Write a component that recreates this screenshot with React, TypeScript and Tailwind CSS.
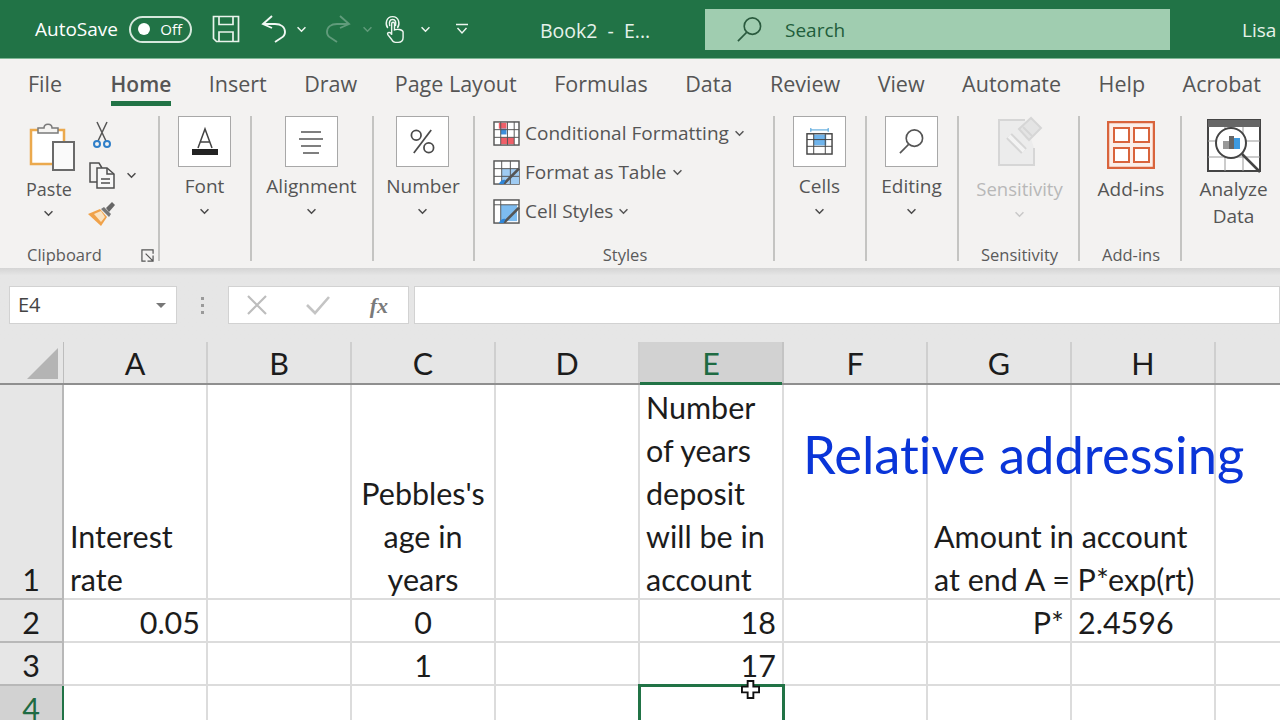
import { ReactNode } from "react";

const UI = "font-['Open_Sans','Noto_Sans',sans-serif]";
const SHEET = "font-['Lato','Liberation_Sans',sans-serif]";

function Chevron({ className = "", color = "#4a4a4a" }: { className?: string; color?: string }) {
  return (
    <svg viewBox="0 0 12 8" className={`w-[11px] h-[7px] ${className}`} fill="none" stroke={color} strokeWidth="1.7">
      <path d="M1.5 1.5 6 6l4.5-4.5" />
    </svg>
  );
}

function SaveIcon() {
  return (
    <svg viewBox="0 0 28 28" className="w-[28px] h-[28px]" fill="none" stroke="#e9f3ec" strokeWidth="1.7">
      <path d="M1.5 1.5h25v25h-22l-3-3z" />
      <path d="M7 1.5v8h14v-8M7 26.5V17h14v9.5" />
    </svg>
  );
}

function UndoIcon({ dim }: { dim?: boolean }) {
  return (
    <svg viewBox="0 0 26 28" className={`w-[26px] h-[28px] ${dim ? "-scale-x-100 opacity-30" : ""}`} fill="none" stroke="#f2f8f4" strokeWidth="1.9">
      <path d="M11 1 2 9l9 4" />
      <path d="M2 9h12c6 0 10 3 10 8 0 3-2 5-4 6l-6 4" />
    </svg>
  );
}

function TouchIcon() {
  return (
    <svg viewBox="0 0 22 30" className="w-[21px] h-[30px]" fill="none" stroke="#eef6f0" strokeWidth="1.5">
      <path d="M4 14C1 10 2 2 9 2s8 8 5 12" />
      <path d="M6 12C5 8 6 5 9 5s4 3 3 7" />
      <path d="M8 21V9.500c0-2 3-2 3 0V16c2-1 8-1 9 2v6c0 3-2 5-5 5h-3c-2 0-3-1-4-3l-4-5c-1-2 1-3 3-2z" fill="#217346" />
    </svg>
  );
}

function SearchGlass({ color, className }: { color: string; className: string }) {
  return (
    <svg viewBox="0 0 28 28" className={className} fill="none" stroke={color} strokeWidth="1.7">
      <circle cx="17" cy="10.500" r="8.500" />
      <path d="M11 17 2 26" />
    </svg>
  );
}

function PasteIcon() {
  return (
    <svg viewBox="0 0 48 50" className="w-[48px] h-[50px]">
      <path d="M2 8h33v34H2z" fill="#fff" stroke="#eba94d" strokeWidth="2.500" />
      <path d="M9 11V6h6c0-5 8-5 8 0h6v5z" fill="#f5f4f2" stroke="#7a7a7a" strokeWidth="1.500" />
      <path d="M24 20h21v28H24z" fill="#fafafa" stroke="#6a6a6a" strokeWidth="2" />
    </svg>
  );
}

function ScissorsIcon() {
  return (
    <svg viewBox="0 0 20 28" className="w-[20px] h-[28px]" fill="none">
      <path d="M5 1l9 19M15 1 6 20" stroke="#555" strokeWidth="1.500" />
      <circle cx="5" cy="23" r="3" stroke="#2f7fc9" strokeWidth="2" />
      <circle cx="15" cy="23" r="3" stroke="#2f7fc9" strokeWidth="2" />
    </svg>
  );
}

function CopyIcon() {
  return (
    <svg viewBox="0 0 28 28" className="w-[28px] h-[28px]" fill="none" stroke="#4f4f4f" strokeWidth="1.500">
      <path d="M9 21H2V2h9l3 5" />
      <path d="M9 7h10l7 6v14H9z" fill="#f8f8f8" />
      <path d="M19 7v6h7M13 18h9M13 22h9" />
    </svg>
  );
}

function BrushIcon() {
  return (
    <svg viewBox="0 0 28 26" className="w-[28px] h-[26px]">
      <path d="M0 13 12 8l7 8-6 9z" fill="#f0a24a" />
      <path d="M6 13l7-3 4 6-4 5z" fill="#fbe3c2" />
      <path d="M13 8l8 8 2-3-7-7z" fill="#777" />
      <path d="M18 7l6-6 3 3-6 7z" fill="#666" />
    </svg>
  );
}

function FontIcon() {
  return (
    <svg viewBox="0 0 28 32" className="w-[28px] h-[32px]">
      <path d="M7 22 14 3l7 19M9.500 16h9" fill="none" stroke="#444" strokeWidth="1.500" />
      <rect x="1" y="23" width="26" height="6" fill="#222" />
    </svg>
  );
}

function AlignIcon() {
  return (
    <svg viewBox="0 0 26 24" className="w-[26px] h-[24px]" stroke="#555" strokeWidth="1.500">
      <path d="M3 2h20M1 9h24M3 16h20M5 23h16" />
    </svg>
  );
}

function PercentIcon() {
  return (
    <svg viewBox="0 0 28 28" className="w-[27px] h-[27px]" fill="none" stroke="#4a4a4a" strokeWidth="1.800">
      <circle cx="7.500" cy="7.500" r="5" />
      <circle cx="20.500" cy="20.500" r="5" />
      <path d="M23 2 5 26" />
    </svg>
  );
}

function CondIcon() {
  return (
    <svg viewBox="0 0 28 26" className="w-[27px] h-[25px]">
      <rect x="1" y="1" width="26" height="24" fill="#fff" stroke="#555" strokeWidth="1.500" />
      <rect x="6" y="2" width="8" height="6" fill="#ef5f68" />
      <rect x="8" y="8" width="6" height="6" fill="#3d8fdc" />
      <rect x="8" y="17" width="14" height="7" fill="#ef5f68" />
      <path d="M1 9h26M1 17h26M8 1v24M15 1v24M22 1v24" stroke="#555" strokeWidth="1" />
    </svg>
  );
}

function TableIcon() {
  return (
    <svg viewBox="0 0 28 26" className="w-[27px] h-[25px]">
      <rect x="1" y="1" width="26" height="24" fill="#fff" stroke="#555" strokeWidth="1.500" />
      <path d="M9 9h18v16H9z" fill="#9fcbf2" />
      <path d="M1 9h26M1 17h26M9 1v24M18 1v24" stroke="#555" strokeWidth="1" />
      <path d="M9 25 26 8l2 2-15 15z" fill="#555" />
      <path d="M6 25c2-4 5-5 7-4l-2 4z" fill="#2f86d8" />
    </svg>
  );
}

function CellStyleIcon() {
  return (
    <svg viewBox="0 0 28 26" className="w-[27px] h-[25px]">
      <rect x="1" y="1" width="26" height="24" fill="#fff" stroke="#555" strokeWidth="1.500" />
      <rect x="8" y="6" width="17" height="17" fill="#7dbcf0" />
      <path d="M1 6h26M8 1v24" stroke="#555" strokeWidth="1" />
      <path d="M9 25 26 8l2 2-15 15z" fill="#555" />
      <path d="M6 25c2-4 5-5 7-4l-2 4z" fill="#2f86d8" />
    </svg>
  );
}

function CellsIcon() {
  return (
    <svg viewBox="0 0 28 28" className="w-[27px] h-[27px]">
      <path d="M5 2h18M5 0v4M23 0v4" stroke="#3d9ad6" strokeWidth="1" />
      <rect x="1" y="6" width="26" height="21" fill="#fff" stroke="#444" strokeWidth="1.500" />
      <rect x="8" y="7" width="13" height="11" fill="#6fb4ec" />
      <path d="M1 12h26M1 19h26M8 6v21M20 6v21" stroke="#444" strokeWidth="1" />
    </svg>
  );
}

function SensitivityIcon() {
  return (
    <svg viewBox="0 0 46 50" className="w-[46px] h-[50px]" fill="none" stroke="#d6d6d6" strokeWidth="2">
      <path d="M28 4H2v45h35V32" fill="#ececec" />
      <path d="M12 20 27 35" strokeWidth="8" />
      <path d="M12 20 27 35" strokeWidth="4" stroke="#f3f3f3" />
      <path d="M22 13 34 2l10 10-12 12z" fill="#e4e4e4" />
      <path d="M26 11l9 9" />
    </svg>
  );
}

function AddinsIcon() {
  return (
    <svg viewBox="0 0 48 48" className="w-[48px] h-[48px]" fill="none" stroke="#d9643c" strokeWidth="2">
      <rect x="1" y="1" width="46" height="46" fill="#fbeee8" stroke="#d9643c" strokeWidth="2.500" />
      <rect x="7" y="7" width="15" height="14" fill="#fff" />
      <rect x="27" y="7" width="15" height="14" fill="#fff" />
      <rect x="7" y="27" width="15" height="14" fill="#fff" />
      <rect x="27" y="27" width="15" height="14" fill="#fff" />
    </svg>
  );
}

function AnalyzeIcon() {
  return (
    <svg viewBox="0 0 54 54" className="w-[54px] h-[54px]" fill="none">
      <rect x="1" y="1" width="52" height="51" fill="#fff" stroke="#444" strokeWidth="2" />
      <rect x="1" y="1" width="52" height="7" fill="#666" />
      <path d="M1 22h52M1 38h52M18 8v44M36 8v44" stroke="#999" strokeWidth="1" />
      <circle cx="24" cy="24" r="15" fill="#fff" stroke="#444" strokeWidth="2" />
      <rect x="16" y="22" width="6" height="8" fill="#999" />
      <rect x="22" y="17" width="5" height="13" fill="#666" />
      <rect x="27" y="19" width="6" height="11" fill="#3d9ae0" />
      <path d="M35 35 53 53" stroke="#444" strokeWidth="2.500" />
    </svg>
  );
}

function BoxButton({ label, icon }: { label: string; icon: ReactNode }) {
  return (
    <div className="flex flex-col items-center mr-[3px]">
      <div className="w-[53px] h-[51px] bg-white border border-[#a8a8a8] flex items-center justify-center">{icon}</div>
      <span className="mt-[6px] text-[19px] leading-[26px] text-[#555]">{label}</span>
      <Chevron className="mt-[9px]" />
    </div>
  );
}

function Group({ width, label, labelClass = "text-center", children }: { width: string; label?: string; labelClass?: string; children: ReactNode }) {
  return (
    <div className={`${width} relative h-full shrink-0 flex flex-col`}>
      <div className="flex-1 min-h-0 flex justify-center">{children}</div>
      <div className={`h-[24px] text-[16.5px] leading-[36px] text-[#5a5a5a] ${labelClass}`}>{label}</div>
      <div className="absolute right-0 top-0 bottom-0 w-[2px] bg-[#c4c4c2]" />
    </div>
  );
}

function StyleRow({ icon, label }: { icon: ReactNode; label: string }) {
  return (
    <div className="h-[39px] flex items-center gap-[5px]">
      {icon}
      <span className="text-[19px] text-[#555] whitespace-nowrap">{label}</span>
      <Chevron className="w-[9px] h-[6px]" color="#555" />
    </div>
  );
}

function Ribbon() {
  return (
    <div className="h-[160px] shrink-0 bg-[#f3f2f1] flex pt-[8px] pb-[7px] overflow-hidden">
      <Group width="w-[160px]" label="Clipboard" labelClass="pl-[27px]">
        <div className="flex w-full">
          <div className="flex flex-col w-[45px] ml-[26px] pt-[6px] shrink-0">
            <div className="ml-[3px] w-[48px]"><PasteIcon /></div>
            <span className="mt-[4px] text-[18px] leading-[26px] text-[#555] text-center">Paste</span>
            <Chevron className="mt-[8px] self-center" />
          </div>
          <div className="flex flex-col ml-[21px] pt-[5px] gap-[12px]">
            <ScissorsIcon />
            <div className="flex items-center gap-[10px] -ml-[4px]">
              <CopyIcon />
              <Chevron />
            </div>
            <div className="-ml-[4px]"><BrushIcon /></div>
          </div>
        </div>
        <svg viewBox="0 0 14 14" className="absolute right-[6px] bottom-[-1px] w-[13px] h-[13px]" fill="none" stroke="#555" strokeWidth="1.300">
          <path d="M13 5V1H1v12h4M5 5l8 8M13 7v6H7" />
        </svg>
      </Group>
      <Group width="w-[92px]">
        <BoxButton label="Font" icon={<FontIcon />} />
      </Group>
      <Group width="w-[122px]">
        <BoxButton label="Alignment" icon={<AlignIcon />} />
      </Group>
      <Group width="w-[101px]">
        <BoxButton label="Number" icon={<PercentIcon />} />
      </Group>
      <Group width="w-[300px]" label="Styles">
        <div className="w-full pl-[18px] -mt-[2px] flex flex-col">
          <StyleRow icon={<CondIcon />} label="Conditional Formatting" />
          <StyleRow icon={<TableIcon />} label="Format as Table" />
          <StyleRow icon={<CellStyleIcon />} label="Cell Styles" />
        </div>
      </Group>
      <Group width="w-[92px]">
        <BoxButton label="Cells" icon={<CellsIcon />} />
      </Group>
      <Group width="w-[92px]">
        <BoxButton label="Editing" icon={<SearchGlass color="#555" className="w-[27px] h-[27px]" />} />
      </Group>
      <Group width="w-[121px]" label="Sensitivity">
        <div className="flex flex-col items-center">
          <SensitivityIcon />
          <span className="mt-[10px] text-[18.500px] leading-[26px] text-[#b8b8b8]">Sensitivity</span>
          <Chevron className="mt-[9px]" color="#c8c8c8" />
        </div>
      </Group>
      <Group width="w-[102px]" label="Add-ins">
        <div className="flex flex-col items-center pt-[5px]">
          <AddinsIcon />
          <span className="mt-[7px] text-[19px] leading-[26px] text-[#555]">Add-ins</span>
        </div>
      </Group>
      <div className="flex-1 flex flex-col items-center pt-[3px] pl-[5px]">
        <AnalyzeIcon />
        <span className="mt-[3px] text-[19px] leading-[27px] text-[#555] text-center">
          Analyze
          <br />
          Data
        </span>
      </div>
    </div>
  );
}

const tabs = ["File", "Home", "Insert", "Draw", "Page Layout", "Formulas", "Data", "Review", "View", "Automate", "Help", "Acrobat"];

function TitleBar() {
  return (
    <div className="h-[59px] shrink-0 bg-[#217346] border-b border-[#7fb795] flex items-center text-white">
      <span className="ml-[35px] text-[19px] leading-[30px]">AutoSave</span>
      <div className="ml-[11px] w-[63px] h-[27px] rounded-full border-2 border-[#d5e8dc] flex items-center justify-between pl-[7px] pr-[8px]">
        <span className="w-[12px] h-[12px] rounded-full bg-white" />
        <span className="text-[15px]">Off</span>
      </div>
      <div className="ml-[20px]"><SaveIcon /></div>
      <div className="ml-[21px]"><UndoIcon /></div>
      <Chevron className="ml-[9px]" color="#eef6f0" />
      <div className="ml-[18px]"><UndoIcon dim /></div>
      <Chevron className="ml-[11px] opacity-30" color="#eef6f0" />
      <div className="ml-[11px]"><TouchIcon /></div>
      <Chevron className="ml-[15px]" color="#eef6f0" />
      <svg viewBox="0 0 12 12" className="ml-[25px] w-[12px] h-[12px]" fill="none" stroke="#eef6f0" strokeWidth="1.400">
        <path d="M0 1.500h12M1.500 5 6 10l4.500-5" />
      </svg>
      <span className="ml-[72px] mt-[3px] w-[165px] text-[19.500px] text-[#e6f2ea] whitespace-nowrap">Book2&nbsp; -&nbsp; E...</span>
      <div className="w-[465px] h-[41px] bg-[#a0cdb0] flex items-center pl-[31px]">
        <SearchGlass color="#2a5a3e" className="w-[27px] h-[27px]" />
        <span className="ml-[22px] mt-[2px] text-[19px] text-[#1f5d3b]">Search</span>
      </div>
      <span className="ml-[72px] mt-[2px] text-[19px] text-[#e6f2ea]">Lisa</span>
    </div>
  );
}

function TabRow() {
  return (
    <div className="h-[49px] shrink-0 bg-[#f3f2f1] flex items-start pl-[28px] gap-[37.500px] text-[#555]">
      {tabs.map((t) => (
        <div key={t} className={`relative h-full flex items-start pt-[10px] ${t === "File" ? "mr-[11px]" : ""}`}>
          <span className={`leading-[30px] whitespace-nowrap ${t === "Home" ? "text-[21px] font-semibold" : "text-[21.500px]"}`}>{t}</span>
          {t === "Home" && <div className="absolute left-0 right-0 bottom-[2px] h-[5px] bg-[#217346]" />}
        </div>
      ))}
    </div>
  );
}

function FormulaBar() {
  return (
    <div className="h-[74px] shrink-0 flex items-center gap-[6px] pl-[9px] bg-gradient-to-b from-[#d4d4d4] from-0% to-[#e6e6e6] to-[10%]">
      <div className="w-[168px] h-[38px] bg-white border border-[#d2d2d2] flex items-center justify-between pl-[8px] pr-[10px]">
        <span className="text-[20px] text-[#444]">E4</span>
        <span className="w-0 h-0 border-x-[5px] border-x-transparent border-t-[5px] border-t-[#777]" />
      </div>
      <div className="w-[39px] flex flex-col items-center gap-[4px]">
        <span className="w-[3px] h-[3px] bg-[#9a9a9a]" />
        <span className="w-[3px] h-[3px] bg-[#9a9a9a]" />
        <span className="w-[3px] h-[3px] bg-[#9a9a9a]" />
      </div>
      <div className="w-[181px] h-[38px] bg-white border border-[#d2d2d2] flex items-center justify-between pl-[18px] pr-[20px]">
        <svg viewBox="0 0 20 20" className="w-[20px] h-[20px]" stroke="#bdbdbd" strokeWidth="2.200">
          <path d="M1 1l18 18M19 1 1 19" />
        </svg>
        <svg viewBox="0 0 24 20" className="w-[24px] h-[20px]" fill="none" stroke="#c4c4c4" strokeWidth="2.600">
          <path d="M1 10l8 8L23 2" />
        </svg>
        <span className="font-['Liberation_Serif',serif] italic font-bold text-[22px] text-[#7a7a7a]">fx</span>
      </div>
      <div className="flex-1 -ml-[1px] h-[38px] bg-white border border-[#d2d2d2]" />
    </div>
  );
}

type CellDef = { text?: ReactNode; align?: "left" | "right" | "center" };

const rows: { num: number; h: string; cells: Record<string, CellDef> }[] = [
  {
    num: 1,
    h: "h-[215px]",
    cells: {
      A: { text: <>Interest<br />rate</> },
      C: { text: <>Pebbles's<br />age in<br />years</>, align: "center" },
      E: { text: <>Number<br />of years<br />deposit<br />will be in<br />account</> },
      G: { text: <>Amount in account<br />at end A = P*exp(rt)</> },
    },
  },
  {
    num: 2,
    h: "h-[43px]",
    cells: {
      A: { text: "0.05", align: "right" },
      C: { text: "0", align: "center" },
      E: { text: "18", align: "right" },
      G: { text: "P*", align: "right" },
      H: { text: "2.4596" },
    },
  },
  {
    num: 3,
    h: "h-[43px]",
    cells: { C: { text: "1", align: "center" }, E: { text: "17", align: "right" } },
  },
  { num: 4, h: "h-[43px]", cells: {} },
];

const cols = ["A", "B", "C", "D", "E", "F", "G", "H", ""];

function Sheet() {
  return (
    <div className={`${SHEET} relative flex-1 min-h-0 bg-white overflow-hidden text-[30.500px] leading-[43px] text-[#1c1c1c] [font-variant-ligatures:none]`}>
      <div className="h-[43px] flex bg-[#e6e6e6] border-b-2 border-[#8f8f8f]">
        <div className="w-[64px] shrink-0 flex items-end justify-end pr-[5px] pb-[4px] border-r border-[#bdbdbd]">
          <div className="w-0 h-0 border-l-[31px] border-l-transparent border-b-[31px] border-b-[#b4b4b4]" />
        </div>
        {cols.map((c) => (
          <div
            key={c}
            className={`w-[144px] shrink-0 text-center border-r-2 ${
              c === "E" ? "bg-[#d2d2d2] border-[#c4c4c4] relative text-[#1f6b43]" : "border-[#cfcfcf]"
            }`}
          >
            {c}
            {c === "E" && <div className="absolute left-0 right-0 -bottom-[2px] h-[3px] bg-[#217346]" />}
          </div>
        ))}
      </div>
      {rows.map((r) => (
        <div key={r.num} className={`${r.h} flex`}>
          <div
            className={`w-[64px] shrink-0 flex items-end justify-center border-b-2 border-r-2 ${
              r.num === 4 ? "bg-[#d2d2d2] border-r-[#217346] text-[#1f6b43] border-b-[#c4c4c4]" : "bg-[#e6e6e6] border-[#b8b8b8]"
            }`}
          >
            <div className="-mb-[3px]">{r.num}</div>
          </div>
          {cols.map((c) => {
            const cell = r.cells[c];
            const align = cell?.align === "right" ? "text-right pr-[6px]" : cell?.align === "center" ? "text-center" : "text-left pl-[6px]";
            return (
              <div key={c} className={`relative w-[144px] shrink-0 flex flex-col justify-end border-r-2 border-b-2 border-[#dcdcdc] whitespace-nowrap ${align}`}>
                <div className="-mb-[3px]">{cell?.text}</div>
                {r.num === 4 && c === "E" && (
                  <div className="absolute -left-[2px] -top-[2px] w-[147px] h-[60px] border-[3px] border-[#217346]" />
                )}
              </div>
            );
          })}
        </div>
      ))}
      <div className="absolute left-[803px] top-[77px] text-[52.500px] leading-[70px] text-[#0a35d8] whitespace-nowrap">
        Relative addressing
      </div>
      <svg viewBox="0 0 20 20" className="absolute left-[741px] top-[338px] w-[19px] h-[19px]">
        <path d="M7 1h6v6h6v6h-6v6H7v-6H1V7h6z" fill="#fff" stroke="#111" strokeWidth="2" />
      </svg>
    </div>
  );
}

export default function App() {
  return (
    <div className={`${UI} w-[1280px] h-[720px] overflow-hidden flex flex-col`}>
      <TitleBar />
      <TabRow />
      <Ribbon />
      <FormulaBar />
      <Sheet />
    </div>
  );
}
